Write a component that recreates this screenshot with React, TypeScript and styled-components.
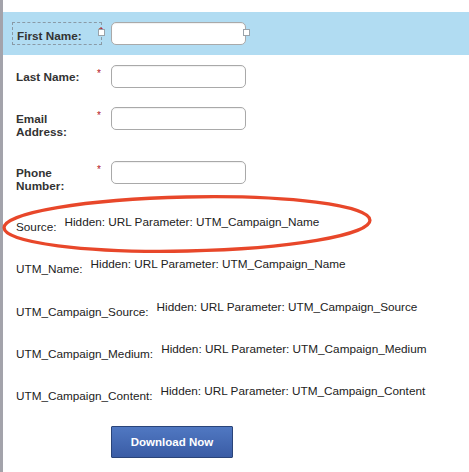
import React from "react";
import styled, { createGlobalStyle } from "styled-components";

const GlobalStyle = createGlobalStyle`
  html, body { margin: 0; padding: 0; background: #fff; }
  body { font-family: "Liberation Sans", Arial, Helvetica, sans-serif; }
`;

const Page = styled.div`
  display: flex;
  min-height: 472px;
  width: 469px;
  overflow: hidden;
`;

const Rail = styled.div`
  width: 3px;
  flex: none;
  background: #a3a3ab;
`;

const Main = styled.form`
  flex: 1;
  padding-top: 12px;
  font-size: 11.75px;
  line-height: 13px;
  color: #222;
`;

const Band = styled.div`
  position: relative;
  display: flex;
  align-items: flex-start;
  background: #b1dcf2;
  padding: 10px 0 10px 9px;
  margin-bottom: 10px;
`;

const DashedLabel = styled.label`
  box-sizing: border-box;
  width: 90px;
  height: 23px;
  margin-right: 9px;
  display: flex;
  align-items: flex-start;
  justify-content: space-between;
  padding: 6px 0 0 4px;
  border: 1px dashed #8a9aa6;
  font-weight: bold;
  color: #333;
`;

const CornerStar = styled.span`
  margin-right: -2px;
  margin-top: -4px;
  font-size: 10px;
  font-weight: normal;
  color: #b3161b;
`;

const Handle = styled.span<{ $left: number }>`
  position: absolute;
  top: 17px;
  left: ${(p) => p.$left}px;
  width: 5px;
  height: 5px;
  background: #fff;
  border: 1px solid #9aa3aa;
`;

const Row = styled.div`
  display: flex;
  align-items: flex-start;
  padding-left: 13px;
  margin-bottom: 19px;
  position: relative;
`;

const Label = styled.label`
  width: 81px;
  flex: none;
  padding: 5px 0 4px;
  font-weight: bold;
  color: #333;
`;

const Star = styled.span`
  width: 14px;
  flex: none;
  padding-top: 2px;
  font-size: 10px;
  color: #b3161b;
`;

const Input = styled.input`
  box-sizing: border-box;
  width: 135px;
  height: 23px;
  margin: 0;
  border: 1px solid #a9a9a9;
  border-radius: 5px;
  background: #fff;
  box-shadow: inset 0 1px 1px rgba(0, 0, 0, 0.06);
  outline: none;
`;

const HiddenLabel = styled.label`
  flex: none;
  padding: 5px 0 5.3px;
  margin-right: 8px;
  color: #222;
`;

const HiddenValue = styled.span`
  color: #222;
`;

const Ellipse = styled.svg`
  position: absolute;
  left: -3px;
  top: -25px;
  width: 380px;
  height: 70px;
  pointer-events: none;
  overflow: visible;
`;

const ButtonRow = styled.div`
  padding-left: 108px;
`;

const Button = styled.button`
  box-sizing: border-box;
  width: 122px;
  height: 32px;
  margin: 0;
  border: 1px solid #2a4479;
  border-radius: 1px;
  background: linear-gradient(#5078c2, #3a5ca5);
  color: #fff;
  font-family: "Liberation Sans", Arial, Helvetica, sans-serif;
  font-weight: bold;
  font-size: 11.5px;
  cursor: pointer;
`;

const requiredFields = [
  { label: ["Last Name:"] },
  { label: ["Email", "Address:"] },
  { label: ["Phone", "Number:"] },
];

const hiddenFields = [
  { label: "Source:", value: "Hidden: URL Parameter: UTM_Campaign_Name", circled: true },
  { label: "UTM_Name:", value: "Hidden: URL Parameter: UTM_Campaign_Name" },
  { label: "UTM_Campaign_Source:", value: "Hidden: URL Parameter: UTM_Campaign_Source" },
  { label: "UTM_Campaign_Medium:", value: "Hidden: URL Parameter: UTM_Campaign_Medium" },
  { label: "UTM_Campaign_Content:", value: "Hidden: URL Parameter: UTM_Campaign_Content" },
];

export default function App() {
  return (
    <>
      <GlobalStyle />
      <Page>
        <Rail />
        <Main onSubmit={(e) => e.preventDefault()}>
          <Band>
            <DashedLabel>
              <span>First Name:</span>
              <CornerStar>*</CornerStar>
            </DashedLabel>
            <Input type="text" />
            <Handle $left={95} />
            <Handle $left={240} />
          </Band>

          {requiredFields.map((f) => (
            <Row key={f.label.join(" ")}>
              <Label>
                {f.label.map((l, i) => (
                  <React.Fragment key={l}>
                    {i > 0 && <br />}
                    {l}
                  </React.Fragment>
                ))}
              </Label>
              <Star>*</Star>
              <Input type="text" />
            </Row>
          ))}

          {hiddenFields.map((f) => (
            <Row key={f.label}>
              <HiddenLabel>{f.label}</HiddenLabel>
              <HiddenValue>{f.value}</HiddenValue>
              {f.circled && (
                <Ellipse viewBox="0 0 380 70">
                  <ellipse
                    cx="187"
                    cy="34"
                    rx="183"
                    ry="27"
                    fill="none"
                    stroke="#e8472a"
                    strokeWidth="3.3"
                    transform="rotate(-1.2 187 34)"
                  />
                </Ellipse>
              )}
            </Row>
          ))}

          <ButtonRow>
            <Button type="submit">Download Now</Button>
          </ButtonRow>
        </Main>
      </Page>
    </>
  );
}
